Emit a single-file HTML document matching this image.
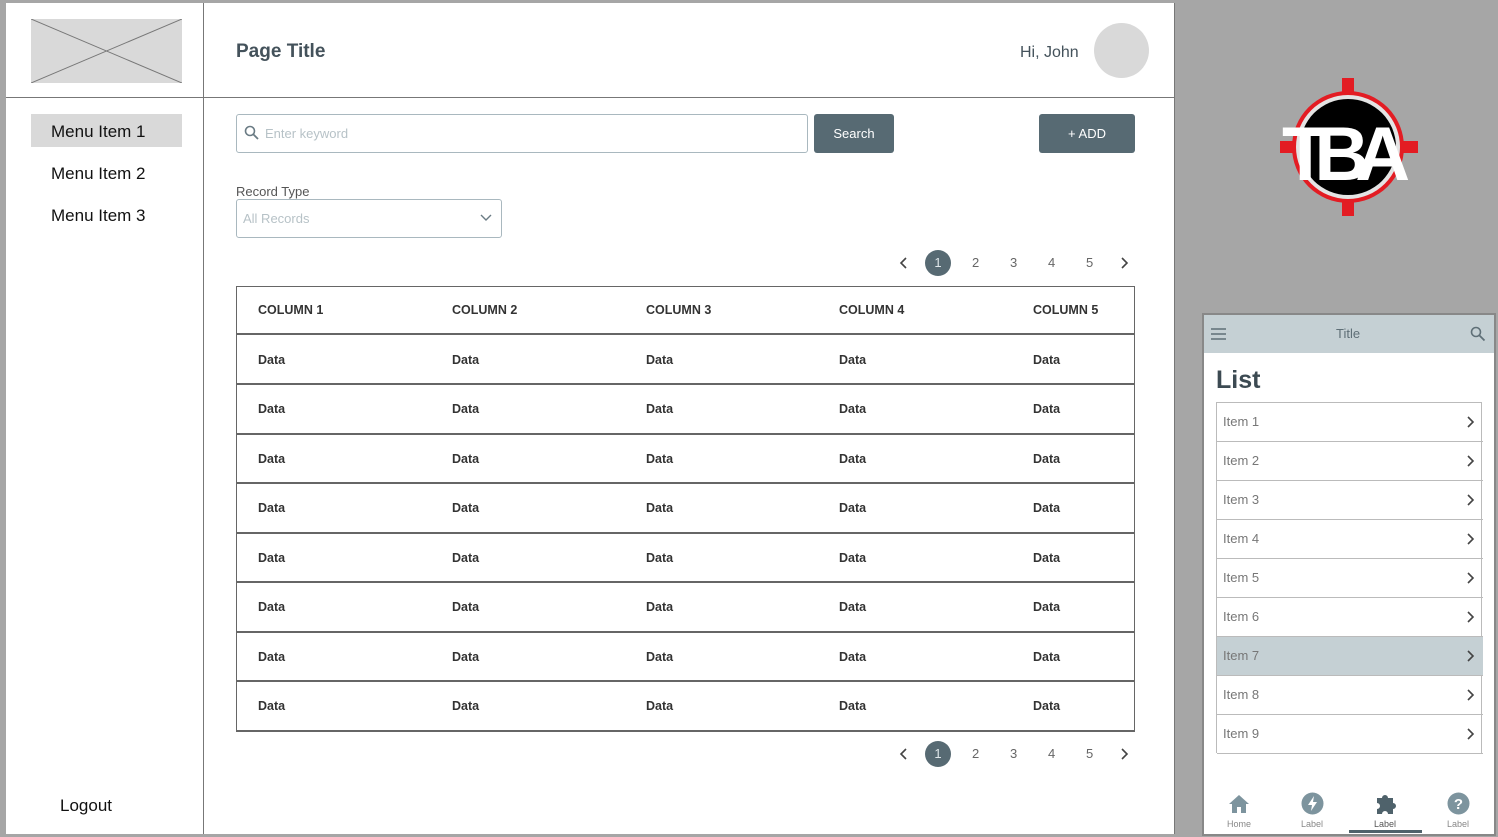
<!DOCTYPE html>
<html><head><meta charset="utf-8"><style>
*{margin:0;padding:0;box-sizing:border-box}
body{width:1498px;height:837px;background:#a6a6a6;position:relative;overflow:hidden;font-family:"Liberation Sans",Arial,sans-serif}
.a{position:absolute}
.main{left:6px;top:3px;width:1169px;height:831px;background:#fff;border-right:1px solid #777}
.t{font-size:12.5px;color:#333;font-weight:bold}
.row{position:absolute;left:0;width:898px;border-bottom:2px solid #666}
.pg{font-size:13px;color:#666}
.mi{position:absolute;left:0;width:266px;height:39px;border-bottom:1px solid #bbb;font-size:13px;color:#777;padding:11px 6px}
.mi svg{position:absolute;right:8px;top:13px}
.nav{position:absolute;font-size:9px;color:#888;text-align:center;width:50px}
</style></head><body>
<div class="a main"></div>
<svg class="a" style="left:31px;top:19px" width="151" height="64"><rect width="151" height="64" fill="#d9d9d9"/><line x1="0" y1="0" x2="151" y2="64" stroke="#777"/><line x1="0" y1="64" x2="151" y2="0" stroke="#777"/></svg>
<div class="a" style="left:203px;top:3px;width:1px;height:831px;background:#777"></div>
<div class="a" style="left:6px;top:97px;width:1168px;height:1px;background:#777"></div>
<div class="a" style="left:236px;top:41px;font-size:19px;font-weight:bold;color:#44525b">Page Title</div>
<div class="a" style="left:1020px;top:44px;font-size:16px;color:#44525b">Hi, John</div>
<div class="a" style="left:1094px;top:23px;width:55px;height:55px;border-radius:50%;background:#d9d9d9"></div>
<div class="a" style="left:31px;top:114px;width:151px;height:33px;background:#d9d9d9"></div>
<div class="a" style="left:51px;top:122px;font-size:17px;color:#111">Menu Item 1</div>
<div class="a" style="left:51px;top:164px;font-size:17px;color:#111">Menu Item 2</div>
<div class="a" style="left:51px;top:206px;font-size:17px;color:#111">Menu Item 3</div>
<div class="a" style="left:60px;top:796px;font-size:17px;color:#111">Logout</div>
<div class="a" style="left:236px;top:114px;width:572px;height:39px;border:1px solid #a9b8bf;border-radius:3px"></div>
<svg class="a" style="left:244px;top:125px" width="16" height="16"><circle cx="6" cy="6" r="4.5" fill="none" stroke="#6a7b84" stroke-width="1.6"/><line x1="9.5" y1="9.5" x2="14" y2="14" stroke="#6a7b84" stroke-width="1.8"/></svg>
<div class="a" style="left:265px;top:126px;font-size:13px;color:#b7c2c7">Enter keyword</div>
<div class="a" style="left:814px;top:114px;width:80px;height:39px;background:#576a73;border-radius:3px;color:#fff;font-size:13px;text-align:center;line-height:39px">Search</div>
<div class="a" style="left:1039px;top:114px;width:96px;height:39px;background:#576a73;border-radius:3px;color:#fff;font-size:13px;text-align:center;line-height:39px">+ ADD</div>
<div class="a" style="left:236px;top:184px;font-size:13px;color:#555">Record Type</div>
<div class="a" style="left:236px;top:199px;width:266px;height:39px;border:1px solid #a9b8bf;border-radius:3px"></div>
<div class="a" style="left:243px;top:211px;font-size:13px;color:#b7c2c7">All Records</div>
<svg class="a" style="left:480px;top:214px" width="12" height="8"><polyline points="1,1 6,6 11,1" fill="none" stroke="#6a7b84" stroke-width="1.4"/></svg>
<div id="p1"></div>
<div class="a" style="left:236px;top:286px;width:899px;height:446px;border:1px solid #666;border-bottom:none"></div>
<div class="a" style="left:236px;top:286px;width:899px">
<div class="row" style="top:0;height:49px"></div>
<div class="row" style="top:49px;height:50px"></div>
<div class="row" style="top:99px;height:50px"></div>
<div class="row" style="top:149px;height:49px"></div>
<div class="row" style="top:198px;height:50px"></div>
<div class="row" style="top:248px;height:49px"></div>
<div class="row" style="top:297px;height:50px"></div>
<div class="row" style="top:347px;height:49px"></div>
<div class="row" style="top:396px;height:50px"></div>
</div>
<div id="cells"></div>
<svg class="a" style="left:1278px;top:78px" width="142" height="140" viewBox="0 0 142 140">
<rect x="64" y="0" width="12" height="18" fill="#e31c23"/><rect x="64" y="120" width="12" height="18" fill="#e31c23"/>
<rect x="2" y="63" width="18" height="12" fill="#e31c23"/><rect x="122" y="63" width="18" height="12" fill="#e31c23"/>
<circle cx="70" cy="69" r="56" fill="#e31c23"/><circle cx="70" cy="69" r="52" fill="#e4e4e4"/><circle cx="70" cy="69" r="48" fill="#000"/>
<text x="4" y="102" font-family="Liberation Sans" font-weight="bold" font-size="76" fill="#fff" letter-spacing="-14">TBA</text>
</svg>
<div class="a" style="left:1202px;top:313px;width:294px;height:523px;background:#fff;border:2px solid #888"></div>
<div class="a" style="left:1204px;top:315px;width:290px;height:38px;background:#c5d0d4"></div>
<svg class="a" style="left:1211px;top:328px" width="16" height="12"><path d="M0 1h15M0 6h15M0 11h15" stroke="#5f6f77" stroke-width="1.5"/></svg>
<div class="a" style="left:1336px;top:326px;font-size:13px;color:#5f6f77">Title</div>
<svg class="a" style="left:1470px;top:326px" width="16" height="16"><circle cx="6" cy="6" r="4.5" fill="none" stroke="#5f6f77" stroke-width="1.6"/><line x1="9.5" y1="9.5" x2="14.5" y2="14.5" stroke="#5f6f77" stroke-width="1.8"/></svg>
<div class="a" style="left:1216px;top:366px;font-size:25px;font-weight:bold;color:#3c4a52">List</div>
<div class="a" style="left:1216px;top:402px;width:266px;height:351px;border:1px solid #bbb;border-bottom:none">
<div class="mi" style="top:0">Item 1<svg width="8" height="12"><polyline points="1,1 6,6 1,11" fill="none" stroke="#444" stroke-width="1.6"/></svg></div>
<div class="mi" style="top:39px">Item 2<svg width="8" height="12"><polyline points="1,1 6,6 1,11" fill="none" stroke="#444" stroke-width="1.6"/></svg></div>
<div class="mi" style="top:78px">Item 3<svg width="8" height="12"><polyline points="1,1 6,6 1,11" fill="none" stroke="#444" stroke-width="1.6"/></svg></div>
<div class="mi" style="top:117px">Item 4<svg width="8" height="12"><polyline points="1,1 6,6 1,11" fill="none" stroke="#444" stroke-width="1.6"/></svg></div>
<div class="mi" style="top:156px">Item 5<svg width="8" height="12"><polyline points="1,1 6,6 1,11" fill="none" stroke="#444" stroke-width="1.6"/></svg></div>
<div class="mi" style="top:195px">Item 6<svg width="8" height="12"><polyline points="1,1 6,6 1,11" fill="none" stroke="#444" stroke-width="1.6"/></svg></div>
<div class="mi" style="top:234px;background:#c5d0d4">Item 7<svg width="8" height="12"><polyline points="1,1 6,6 1,11" fill="none" stroke="#444" stroke-width="1.6"/></svg></div>
<div class="mi" style="top:273px">Item 8<svg width="8" height="12"><polyline points="1,1 6,6 1,11" fill="none" stroke="#444" stroke-width="1.6"/></svg></div>
<div class="mi" style="top:312px">Item 9<svg width="8" height="12"><polyline points="1,1 6,6 1,11" fill="none" stroke="#444" stroke-width="1.6"/></svg></div>
</div>
<svg class="a" style="left:1228px;top:794px" width="22" height="20"><path d="M11 1L1 10h3v9h5v-6h4v6h5v-9h3z" fill="#7d949e"/></svg>
<div class="nav" style="left:1214px;top:819px">Home</div>
<svg class="a" style="left:1301px;top:792px" width="23" height="23"><circle cx="11.5" cy="11.5" r="11" fill="#7d949e"/><path d="M13 4L7 13h4l-1 6 6-9h-4z" fill="#fff"/></svg>
<div class="nav" style="left:1287px;top:819px">Label</div>
<svg class="a" style="left:1374px;top:791px" width="24" height="24"><path d="M3 7h5a3 3 0 1 1 6 0h5v5a3 3 0 1 1 0 6v5h-5a3 3 0 1 0-6 0H3v-5a3 3 0 1 0 0-6z" fill="#4f626b"/></svg>
<div class="nav" style="left:1360px;top:819px;color:#555">Label</div>
<div class="a" style="left:1349px;top:830px;width:73px;height:3px;background:#4f626b"></div>
<svg class="a" style="left:1447px;top:792px" width="23" height="23"><circle cx="11.5" cy="11.5" r="11" fill="#7d949e"/><text x="11.5" y="17" text-anchor="middle" font-family="Liberation Sans" font-weight="bold" font-size="15" fill="#fff">?</text></svg>
<div class="nav" style="left:1433px;top:819px">Label</div>
<script>
function pag(y){let h='';
h+=`<svg class="a" style="left:899px;top:${y-6}px" width="8" height="12"><polyline points="7,1 2,6 7,11" fill="none" stroke="#444" stroke-width="1.6"/></svg>`;
h+=`<div class="a" style="left:925px;top:${y-13}px;width:26px;height:26px;border-radius:50%;background:#576a73;color:#dfe6e9;font-size:13px;text-align:center;line-height:26px">1</div>`;
[2,3,4,5].forEach((n,i)=>{h+=`<div class="a pg" style="left:${972+i*38}px;top:${y-8}px">${n}</div>`});
h+=`<svg class="a" style="left:1121px;top:${y-6}px" width="8" height="12"><polyline points="1,1 6,6 1,11" fill="none" stroke="#444" stroke-width="1.6"/></svg>`;
return h}
document.getElementById('p1').outerHTML=pag(263)+pag(754);
let xs=[258,452,646,839,1033],c='';
xs.forEach((x,i)=>{c+=`<div class="a t" style="left:${x}px;top:303px">COLUMN ${i+1}</div>`;
[353,402,452,501,551,600,650,699].forEach(y=>{c+=`<div class="a t" style="left:${x}px;top:${y}px">Data</div>`})});
document.getElementById('cells').outerHTML=c;
</script>
</body></html>
